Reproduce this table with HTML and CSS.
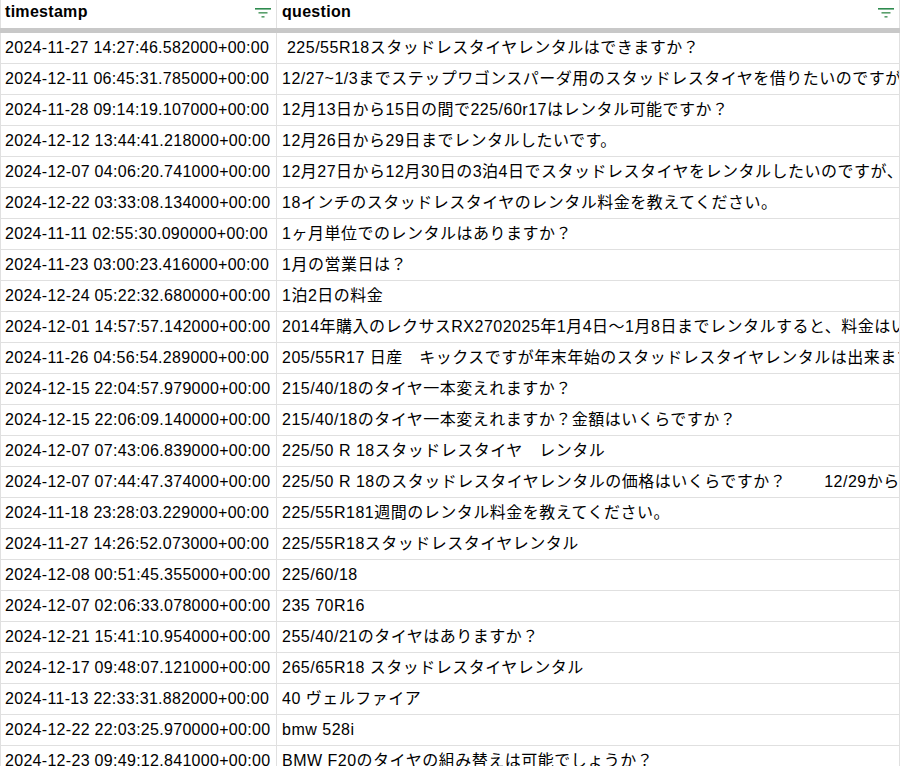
FILE: index.html
```html
<!DOCTYPE html>
<html lang="ja">
<head>
<meta charset="utf-8">
<title>questions</title>
<link rel="stylesheet" href="styles.css">
</head>
<body>
<div class="sheet">
  <div class="head">
    <div class="hcell"><span class="hlabel">timestamp</span>
      <svg class="filter" width="16" height="10" viewBox="0 0 16 10"><rect x="0" y="0" width="16" height="1.6" fill="#2e8b4e"/><rect x="3.5" y="4" width="9" height="1.6" fill="#5aa06c"/><rect x="6.5" y="8" width="3" height="1.6" fill="#5aa06c"/></svg>
    </div>
    <div class="hcell"><span class="hlabel">question</span>
      <svg class="filter" width="16" height="10" viewBox="0 0 16 10"><rect x="0" y="0" width="16" height="1.6" fill="#2e8b4e"/><rect x="3.5" y="4" width="9" height="1.6" fill="#5aa06c"/><rect x="6.5" y="8" width="3" height="1.6" fill="#5aa06c"/></svg>
    </div>
  </div>
  <div class="bar"></div>
  <div class="row"><div class="cell">2024-11-27 14:27:46.582000+00:00</div><div class="cell q"> 225/55R18スタッドレスタイヤレンタルはできますか？</div></div>
  <div class="row"><div class="cell">2024-12-11 06:45:31.785000+00:00</div><div class="cell q">12/27~1/3までステップワゴンスパーダ用のスタッドレスタイヤを借りたいのですが</div></div>
  <div class="row"><div class="cell">2024-11-28 09:14:19.107000+00:00</div><div class="cell q">12月13日から15日の間で225/60r17はレンタル可能ですか？</div></div>
  <div class="row"><div class="cell">2024-12-12 13:44:41.218000+00:00</div><div class="cell q">12月26日から29日までレンタルしたいです。</div></div>
  <div class="row"><div class="cell">2024-12-07 04:06:20.741000+00:00</div><div class="cell q">12月27日から12月30日の3泊4日でスタッドレスタイヤをレンタルしたいのですが、</div></div>
  <div class="row"><div class="cell">2024-12-22 03:33:08.134000+00:00</div><div class="cell q">18インチのスタッドレスタイヤのレンタル料金を教えてください。</div></div>
  <div class="row"><div class="cell">2024-11-11 02:55:30.090000+00:00</div><div class="cell q">1ヶ月単位でのレンタルはありますか？</div></div>
  <div class="row"><div class="cell">2024-11-23 03:00:23.416000+00:00</div><div class="cell q">1月の営業日は？</div></div>
  <div class="row"><div class="cell">2024-12-24 05:22:32.680000+00:00</div><div class="cell q">1泊2日の料金</div></div>
  <div class="row"><div class="cell">2024-12-01 14:57:57.142000+00:00</div><div class="cell q">2014年購入のレクサスRX2702025年1月4日～1月8日までレンタルすると、料金はいくらですか</div></div>
  <div class="row"><div class="cell">2024-11-26 04:56:54.289000+00:00</div><div class="cell q">205/55R17 日産　キックスですが年末年始のスタッドレスタイヤレンタルは出来ますか</div></div>
  <div class="row"><div class="cell">2024-12-15 22:04:57.979000+00:00</div><div class="cell q">215/40/18のタイヤ一本変えれますか？</div></div>
  <div class="row"><div class="cell">2024-12-15 22:06:09.140000+00:00</div><div class="cell q">215/40/18のタイヤ一本変えれますか？金額はいくらですか？</div></div>
  <div class="row"><div class="cell">2024-12-07 07:43:06.839000+00:00</div><div class="cell q">225/50 R 18スタッドレスタイヤ　レンタル</div></div>
  <div class="row"><div class="cell">2024-12-07 07:44:47.374000+00:00</div><div class="cell q">225/50 R 18のスタッドレスタイヤレンタルの価格はいくらですか？　　 12/29から一週間</div></div>
  <div class="row"><div class="cell">2024-11-18 23:28:03.229000+00:00</div><div class="cell q">225/55R181週間のレンタル料金を教えてください。</div></div>
  <div class="row"><div class="cell">2024-11-27 14:26:52.073000+00:00</div><div class="cell q">225/55R18スタッドレスタイヤレンタル</div></div>
  <div class="row"><div class="cell">2024-12-08 00:51:45.355000+00:00</div><div class="cell q">225/60/18</div></div>
  <div class="row"><div class="cell">2024-12-07 02:06:33.078000+00:00</div><div class="cell q">235 70R16</div></div>
  <div class="row"><div class="cell">2024-12-21 15:41:10.954000+00:00</div><div class="cell q">255/40/21のタイヤはありますか？</div></div>
  <div class="row"><div class="cell">2024-12-17 09:48:07.121000+00:00</div><div class="cell q">265/65R18 スタッドレスタイヤレンタル</div></div>
  <div class="row"><div class="cell">2024-11-13 22:33:31.882000+00:00</div><div class="cell q">40 ヴェルファイア</div></div>
  <div class="row"><div class="cell">2024-12-22 22:03:25.970000+00:00</div><div class="cell q">bmw 528i</div></div>
  <div class="row"><div class="cell">2024-12-23 09:49:12.841000+00:00</div><div class="cell q">BMW F20のタイヤの組み替えは可能でしょうか？</div></div>
</div>
</body>
</html>
```

FILE: styles.css
```css
html, body {
  margin: 0;
  padding: 0;
  background: #ffffff;
  overflow: hidden;
}

.sheet {
  width: 900px;
  font-family: "Liberation Sans", Arial, "Noto Sans CJK JP", sans-serif;
  font-size: 16px;
  letter-spacing: 0.3px;
  color: #000000;
}

.head,
.row {
  display: grid;
  grid-template-columns: 277px 623px;
}

.hcell {
  height: 28px;
  box-sizing: border-box;
  padding: 0 5px 4px 5px;
  display: flex;
  align-items: center;
  justify-content: space-between;
  border-right: 1px solid #e0e0e0;
  font-weight: bold;
}

.hcell:first-child {
  border-left: 1px solid #e0e0e0;
  padding-left: 4px;
}

.filter {
  display: block;
  margin-top: 2px;
}

.bar {
  height: 5px;
  background: #c8c8c8;
}

.cell {
  height: 31px;
  box-sizing: border-box;
  padding: 0 5px;
  line-height: 30px;
  white-space: pre;
  overflow: hidden;
  border-right: 1px solid #e0e0e0;
  border-bottom: 1px solid #e0e0e0;
}

.cell:first-child {
  border-left: 1px solid #e0e0e0;
  padding-left: 4px;
}

.q {
  padding-left: 5px;
  letter-spacing: 0.5px;
}
```
